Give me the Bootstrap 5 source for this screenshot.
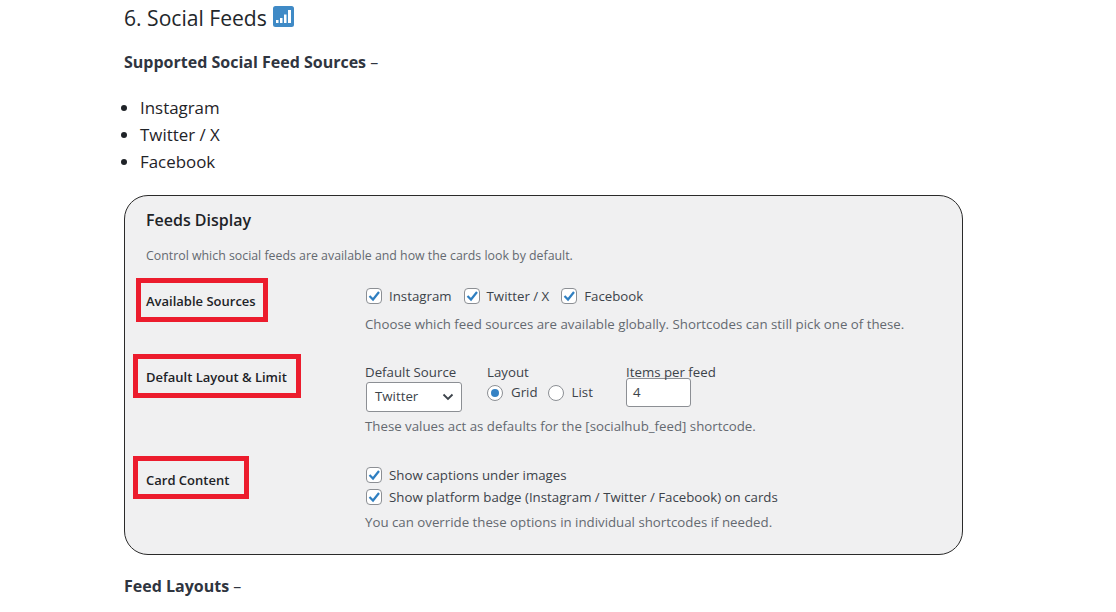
<!DOCTYPE html>
<html lang="en"><head><meta charset="utf-8"><title>Social Feeds</title>
<link href="https://cdn.jsdelivr.net/npm/bootstrap@5.3.0/dist/css/bootstrap.min.css" rel="stylesheet">
<style>
html,body{height:612px;overflow:hidden;background:#fff}
body{font-family:"Open Sans",sans-serif;color:#1f2328}
.doc{padding:0 0 0 124px;width:1116px}
.doc-h{font-size:21.1px;font-weight:400;line-height:30px;margin:3px 0 0;color:#23272b}
.doc-h svg{vertical-align:-1px;margin-left:1px}
.doc-p{font-size:16px;line-height:24px;margin:17px 0 0;color:#2f3540}
.doc-p b{font-weight:700}
.doc-l{font-size:16.9px;line-height:27px;margin:20px 0 0;padding-left:16px}
.shot{width:839px;height:360px;margin-top:20px;border:1px solid #2a2a2a;border-radius:24px;background:#f0f0f1;padding:13px 0 0 21px;color:#3c434a;font-size:13.27px;position:relative}
.shot-t{font-size:16px;font-weight:600;line-height:22px;color:#1d2327;margin:0}
.shot-d{color:#646970;line-height:18px;margin:16px 0 0;font-size:12.35px}
.setrow{display:flex}
.setlabel{width:220px;flex:none;font-weight:600;color:#1d2327;font-size:13px}
.redbox{display:inline-block;border:5px solid #ec1c2d;line-height:18px}
.chk{display:inline-block;width:16px;height:16px;border:1px solid #8c8f94;border-radius:4px;background:#fff;flex:none}
.chk svg{display:block;margin:0}
.chk-t{margin-left:7px;margin-right:12px}
.rad{display:inline-block;width:16px;height:16px;border:1px solid #8c8f94;border-radius:50%;background:#fff;flex:none;position:relative}
.rad.on::after{content:"";position:absolute;left:3px;top:3px;width:8px;height:8px;border-radius:50%;background:#3582c4}
.note{color:#646970;line-height:18px;margin-left:-1px}
.fake-sel{width:96px;height:30px;margin:1px 0 0 1px;border:1px solid #8c8f94;border-radius:3px;background:#fff;display:flex;align-items:center;justify-content:space-between;padding:0 7px 0 8px}
.fake-inp{width:65px;height:29px;border:1px solid #8c8f94;border-radius:3px;background:#fff;padding:0 6px;line-height:27px}
.r1{margin-top:13px;height:44px}
.r2{margin-top:32px;height:44px}
.r3{margin-top:58px}
.l1{margin-left:-10px;padding:9px 7px 7px 5px}
.l2{margin-left:-13px;padding:9px 9px 7px 8px}
.l3{margin-left:-13px;padding:10px 15px 5px 8px}
.foot{font-size:16px;line-height:24px;margin:19px 0 0;color:#2f3540}
.lh18{line-height:18px}
.first1{margin-top:9px}
.note1{margin-top:10px}
.first2{margin-top:9px;margin-left:-1px}
.note2{margin-top:5px}
.first3{margin-top:10px}
.gap3{margin-top:4px}
.note3{margin-top:7px}
.c-src{width:122px}
.c-lay{width:139px}
.rad-row{margin-top:2px}
.rad-a{margin:0 10px 0 8px}
.rad-b{margin-left:8px}
.inp-wrap{margin-top:-3px}
</style></head><body>
<div class="doc">
<h2 class="doc-h">6. Social Feeds <svg width="21" height="21" viewBox="0 0 21 21"><rect width="21" height="21" rx="2.500" fill="#3f8ac6"/><g fill="#fff"><rect x="3" y="14" width="2.500" height="3"/><rect x="7" y="12" width="2.500" height="5"/><rect x="11" y="8.500" width="2.500" height="8.500"/><rect x="15" y="4" width="3" height="13"/></g></svg></h2>
<p class="doc-p"><b>Supported Social Feed Sources</b> –</p>
<ul class="doc-l"><li>Instagram</li><li>Twitter / X</li><li>Facebook</li></ul>
<div class="shot">
<h3 class="shot-t">Feeds Display</h3>
<p class="shot-d">Control which social feeds are available and how the cards look by default.</p>

<div class="setrow r1">
<div class="setlabel"><span class="redbox l1">Available Sources</span></div>
<div>
<div class="d-flex align-items-center lh18 first1">
<span class="chk"><svg width="14" height="14" viewBox="0 0 14 14"><path d="M2.500 7 6 10.500 12 3" fill="none" stroke="#2f7fc1" stroke-width="2.200"/></svg></span><span class="chk-t">Instagram</span>
<span class="chk"><svg width="14" height="14" viewBox="0 0 14 14"><path d="M2.500 7 6 10.500 12 3" fill="none" stroke="#2f7fc1" stroke-width="2.200"/></svg></span><span class="chk-t">Twitter / X</span>
<span class="chk"><svg width="14" height="14" viewBox="0 0 14 14"><path d="M2.500 7 6 10.500 12 3" fill="none" stroke="#2f7fc1" stroke-width="2.200"/></svg></span><span class="chk-t">Facebook</span>
</div>
<div class="note note1">Choose which feed sources are available globally. Shortcodes can still pick one of these.</div>
</div>
</div>

<div class="setrow r2">
<div class="setlabel"><span class="redbox l2">Default Layout &amp; Limit</span></div>
<div>
<div class="d-flex first2">
<div class="c-src"><div class="lh18">Default Source</div>
<div class="fake-sel"><span>Twitter</span><svg width="12" height="8" viewBox="0 0 12 8"><path d="M1.500 1.500 6 6 10.500 1.500" fill="none" stroke="#3c434a" stroke-width="1.800"/></svg></div></div>
<div class="c-lay"><div class="lh18">Layout</div>
<div class="d-flex align-items-center rad-row"><span class="rad on"></span><span class="rad-a">Grid</span><span class="rad"></span><span class="rad-b">List</span></div></div>
<div><div class="lh18">Items per feed</div><div class="fake-inp inp-wrap">4</div></div>
</div>
<div class="note note2">These values act as defaults for the [socialhub_feed] shortcode.</div>
</div>
</div>

<div class="setrow r3">
<div class="setlabel"><span class="redbox l3">Card Content</span></div>
<div>
<div class="d-flex align-items-center lh18 first3"><span class="chk"><svg width="14" height="14" viewBox="0 0 14 14"><path d="M2.500 7 6 10.500 12 3" fill="none" stroke="#2f7fc1" stroke-width="2.200"/></svg></span><span class="chk-t">Show captions under images</span></div>
<div class="d-flex align-items-center lh18 gap3"><span class="chk"><svg width="14" height="14" viewBox="0 0 14 14"><path d="M2.500 7 6 10.500 12 3" fill="none" stroke="#2f7fc1" stroke-width="2.200"/></svg></span><span class="chk-t">Show platform badge (Instagram / Twitter / Facebook) on cards</span></div>
<div class="note note3">You can override these options in individual shortcodes if needed.</div>
</div>
</div>
</div>
<p class="foot"><b>Feed Layouts</b> –</p>
</div>
<script src="https://cdn.jsdelivr.net/npm/bootstrap@5.3.0/dist/js/bootstrap.bundle.min.js"></script>
</body></html>
